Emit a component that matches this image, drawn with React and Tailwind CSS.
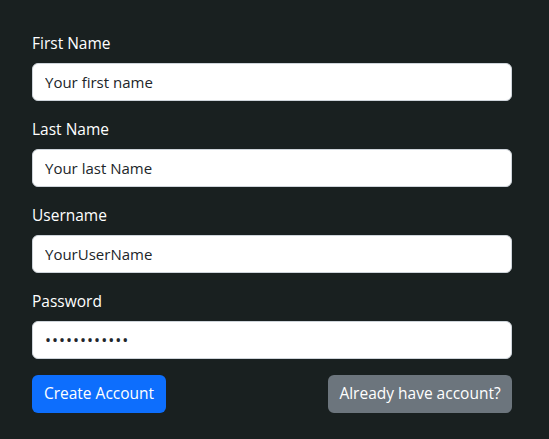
const campos = [
  { id: "firstName", label: "First Name", type: "text", value: "Your first name" },
  { id: "lastName", label: "Last Name", type: "text", value: "Your last Name" },
  { id: "username", label: "Username", type: "text", value: "YourUserName" },
  { id: "password", label: "Password", type: "password", value: "123456789012" },
];

const App = () => {
  return (
    <div
      className="min-h-screen bg-[#192020] px-8 pt-[31px] pb-6 text-white"
      style={{ fontFamily: '"Segoe UI", "Open Sans", "Noto Sans", sans-serif' }}
    >
      <form className="w-[480px]" onSubmit={(e) => e.preventDefault()}>
        {campos.map((c) => (
          <div key={c.id} className="mb-4">
            <label htmlFor={c.id} className="mb-2 block text-[15.5px] leading-6">
              {c.label}
            </label>
            <input
              id={c.id}
              type={c.type}
              defaultValue={c.value}
              className={
                "block h-[38px] w-full rounded-md border border-[#ced4da] bg-white px-3 text-[15px] text-[#212529] outline-none " +
                (c.type === "password" ? "tracking-[1px] text-[16px]" : "")
              }
            />
          </div>
        ))}

        <div className="flex items-center justify-between">
          <button
            type="submit"
            className="h-[38px] w-[134px] rounded-md bg-[#0d6efd] text-[15.5px] text-white"
          >
            Create Account
          </button>
          <button
            type="button"
            className="h-[38px] w-[184px] rounded-md bg-[#6c757d] text-[15.5px] text-white"
          >
            Already have account?
          </button>
        </div>
      </form>
    </div>
  );
};

export default App;
